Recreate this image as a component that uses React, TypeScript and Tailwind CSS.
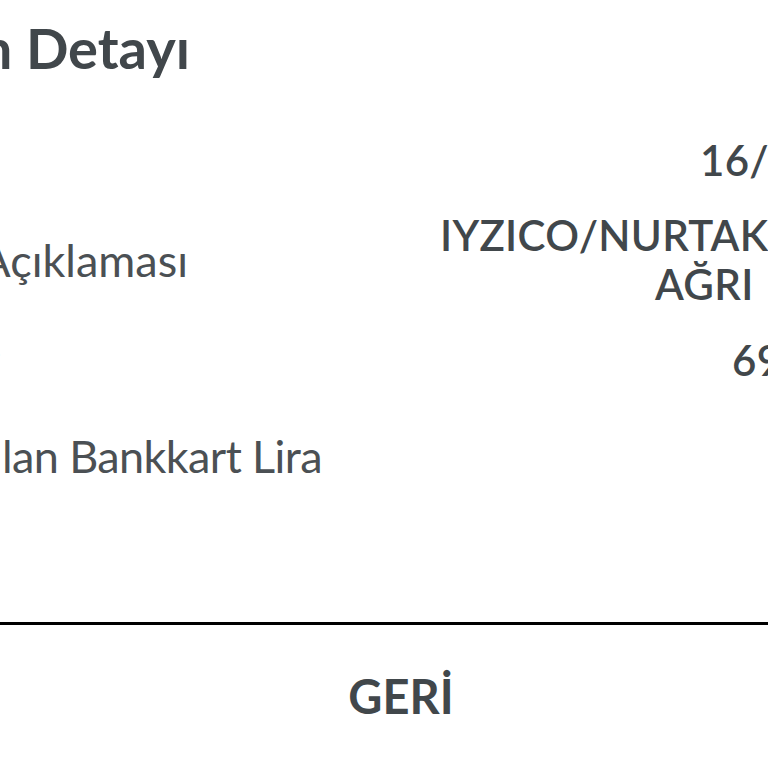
const rows = [
  { label: "İşlem Tarihi", labelRight: 0, value: ["16/03/2021"], valueLeft: 700, h: "h-[100px]", track: "" },
  { label: "İşlem Açıklaması", labelRight: 188, value: ["IYZICO/NURTAKIP MERKEZI", "AĞRI"], valueLeft: 440, h: "h-[100px]", track: "" },
  { label: "Tutar", labelRight: 0, value: ["69,90 TL"], valueLeft: 732, h: "h-[100px]", track: "" },
  { label: "Kullanılan Bankkart Lira", labelRight: 322, value: ["0,00 TL"], valueLeft: 900, h: "h-[92px]", track: "tracking-[-0.6px]" },
];

const App = () => {
  return (
    <div
      className="w-[768px] h-[768px] overflow-hidden bg-white text-[#41474b] flex flex-col"
      style={{ fontFamily: "Lato, 'Open Sans', sans-serif" }}
    >
      <div className="h-[96px] w-[190px] flex items-center justify-end shrink-0">
        <h1 className="whitespace-nowrap text-[56px] font-bold leading-none">İşlemin Detayı</h1>
      </div>

      <div className="pt-[14px] flex flex-col shrink-0">
        {rows.map((row, i) => (
          <div key={i} className={`${row.h} flex items-center`}>
            <div className="shrink-0 flex justify-end" style={{ width: row.labelRight }}>
              <span className={`whitespace-nowrap text-[45px] text-[#4b5054] leading-none ${row.track}`}>{row.label}</span>
            </div>
            <div
              className="flex flex-col items-center whitespace-nowrap text-[42px] tracking-[0.3px] font-semibold leading-[49px]"
              style={{ marginLeft: row.valueLeft - row.labelRight }}
            >
              {row.value.map((line, j) => (
                <span key={j} className={j === 1 ? "self-start pl-[215px]" : ""}>{line}</span>
              ))}
            </div>
          </div>
        ))}
      </div>

      <div className="mt-[120px] border-t-[3px] border-black shrink-0" />

      <button className="h-[144px] w-full flex items-center justify-center text-[47px] font-bold text-[#41474b] pl-[34px]">
        GERİ
      </button>
    </div>
  );
};

export default App;
